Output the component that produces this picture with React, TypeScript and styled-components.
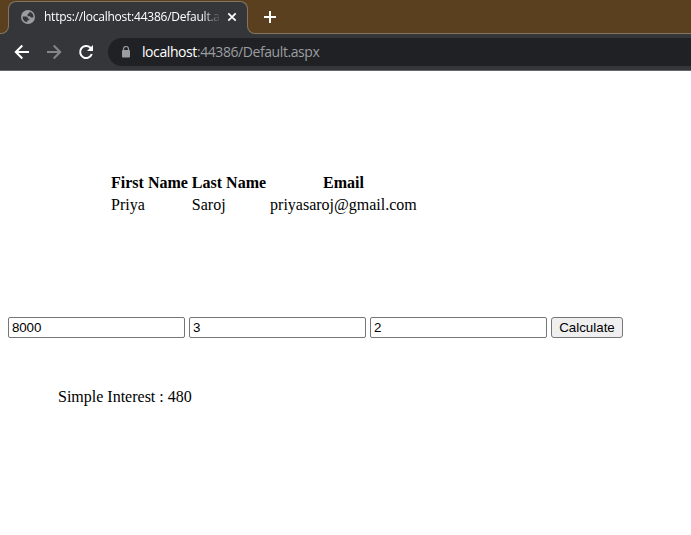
import React from 'react';
import styled, { createGlobalStyle } from 'styled-components';

const FRAME = '#5a401e';
const BAR = '#35363a';
const LINE = '#85765e';

const Global = createGlobalStyle`
  * { box-sizing: border-box; }
  html, body { margin: 0; padding: 0; background: #fff; overflow: hidden; }
  body { font-family: "Liberation Serif", "Times New Roman", serif; font-size: 16px; color: #000; }
`;

const Window = styled.div`
  width: 691px;
  height: 535px;
  display: flex;
  flex-direction: column;
`;

const TabStrip = styled.div`
  height: 34px;
  flex: none;
  display: flex;
  align-items: flex-end;
  background: linear-gradient(${FRAME} 12px, ${BAR} 12px);
`;

const Frame = styled.div<{ $side: 'left' | 'right' }>`
  height: 22px;
  background: ${FRAME};
  border-bottom: 1px solid ${LINE};
  ${({ $side }) =>
    $side === 'left'
      ? `width: 9px; border-right: 1px solid ${LINE}; border-bottom-right-radius: 8px;`
      : `flex: 1; border-left: 1px solid ${LINE}; border-bottom-left-radius: 8px;`}
`;

const Tab = styled.div`
  position: relative;
  width: 238px;
  height: 34px;
  padding: 0 10px 0 12px;
  display: flex;
  align-items: center;

  &::before {
    content: '';
    position: absolute;
    top: 1px;
    left: -1px;
    right: -1px;
    height: 12px;
    background: ${BAR};
    border: 1px solid ${LINE};
    border-bottom: 0;
    border-radius: 8px 8px 0 0;
  }

  > * { position: relative; flex: none; }
`;

const TabTitle = styled.span`
  width: 176px;
  margin-left: 9px;
  overflow: hidden;
  white-space: nowrap;
  font: 12px/18px "Open Sans", sans-serif;
  letter-spacing: -0.24px;
  color: #fff;
  mask-image: linear-gradient(to right, #000 158px, transparent 177px);
`;

const CloseIcon = styled.svg`
  margin-left: 7px;
`;

const NewTab = styled.svg`
  display: block;
  margin: -2px 0 0 15px;
`;

const Toolbar = styled.div`
  height: 37px;
  flex: none;
  display: flex;
  align-items: center;
  padding-left: 14px;
  background: ${BAR};
  border-bottom: 1px solid #66656a;
`;

const NavIcon = styled.svg<{ $dim?: boolean }>`
  width: 16px;
  height: 16px;
  margin-right: 16px;
  flex: none;
  color: ${({ $dim }) => ($dim ? '#85868a' : '#fff')};
`;

const AddressBar = styled.div`
  flex: 1;
  height: 28px;
  margin-left: -2px;
  padding-left: 13px;
  display: flex;
  align-items: center;
  background: #202124;
  border-radius: 14px 0 0 14px;
`;

const Url = styled.span`
  margin-left: 11px;
  font: 14px/20px "Open Sans", sans-serif;
  letter-spacing: -0.42px;
  color: #9a9da1;
  white-space: nowrap;
`;

const Host = styled.span`
  color: #fff;
`;

const Page = styled.main`
  flex: 1;
  padding: 100px 8px 0;
`;

const People = styled.table`
  margin-left: 100px;
  border-spacing: 2px;
  line-height: 18px;

  th, td { padding: 1px; white-space: nowrap; }
  td { text-align: left; }
`;

const Form = styled.form`
  display: flex;
  gap: 4px;
  margin-top: 100px;
`;

const Field = styled.input`
  width: 177px;
  height: 21px;
  padding: 1px 3px;
  border: 1px solid #767676;
  border-radius: 2px;
  background: #fff;
  color: #000;
  font: 13.333px "Liberation Sans", Arial, sans-serif;
  letter-spacing: -0.1px;
  outline: 0;
`;

const Calculate = styled.button`
  width: 72px;
  height: 21px;
  padding: 0;
  border: 1px solid #767676;
  border-radius: 3px;
  background: #efefef;
  color: #000;
  font: 13.333px "Liberation Sans", Arial, sans-serif;
`;

const Result = styled.p`
  margin: 50px 0 0 50px;
  line-height: 18px;
`;

export default function App() {
  return (
    <Window>
      <Global />
      <TabStrip>
        <Frame $side="left" />
        <Tab>
          <svg width="14" height="14" viewBox="0 0 14 14">
            <circle cx="7" cy="7" r="7" fill="#9a9da1" />
            <path
              d="M1.6 6.6H4.8C6.2 6.6 6.9 7.3 6.9 8.7H8.3V10.2H6.3V12.3A5.4 5.4 0 0 1 1.6 6.6ZM8.3 1.8A5.4 5.4 0 0 1 12.4 7.6H10.4C9.5 7.6 9.2 7 9.2 6.2H6.6V4.6C6.6 3.8 7.2 3.5 8.3 3.5Z"
              fill={BAR}
            />
          </svg>
          <TabTitle>https://localhost:44386/Default.aspx</TabTitle>
          <CloseIcon width="10" height="10" viewBox="0 0 10 10">
            <path d="M1.3 1.3 8.7 8.7M8.7 1.3 1.3 8.7" stroke="#fff" strokeWidth="1.7" />
          </CloseIcon>
        </Tab>
        <Frame $side="right">
          <NewTab width="14" height="14" viewBox="0 0 14 14">
            <path d="M7 1V13M1 7H13" stroke="#fff" strokeWidth="2" />
          </NewTab>
        </Frame>
      </TabStrip>
      <Toolbar>
        <NavIcon viewBox="0 0 16 16">
          <path d="M15 8H2M8.3 1.5 1.8 8l6.5 6.5" fill="none" stroke="currentColor" strokeWidth="2" />
        </NavIcon>
        <NavIcon viewBox="0 0 16 16" $dim>
          <path d="M1 8h13M7.7 1.5 14.2 8l-6.5 6.5" fill="none" stroke="currentColor" strokeWidth="2" />
        </NavIcon>
        <NavIcon viewBox="0 0 16 16">
          <path d="M13.8 10A6 6 0 1 1 12.4 3.8L13.3 4.8" fill="none" stroke="currentColor" strokeWidth="2" />
          <path d="M15 1V7H9Z" fill="currentColor" />
        </NavIcon>
        <AddressBar>
          <svg width="10" height="12" viewBox="0 0 10 12">
            <path d="M2.5 5V3a2.5 2.5 0 0 1 5 0v2" fill="none" stroke="#9a9da1" strokeWidth="1.2" />
            <rect x="1" y="4" width="8" height="7.5" rx="1" fill="#9a9da1" />
          </svg>
          <Url>
            <Host>localhost</Host>:44386/Default.aspx
          </Url>
        </AddressBar>
      </Toolbar>
      <Page>
        <People>
          <thead>
            <tr>
              <th>First Name</th>
              <th>Last Name</th>
              <th>Email</th>
            </tr>
          </thead>
          <tbody>
            <tr>
              <td>Priya</td>
              <td>Saroj</td>
              <td>priyasaroj@gmail.com</td>
            </tr>
          </tbody>
        </People>
        <Form onSubmit={(event) => event.preventDefault()}>
          <Field defaultValue="8000" />
          <Field defaultValue="3" />
          <Field defaultValue="2" />
          <Calculate type="submit">Calculate</Calculate>
        </Form>
        <Result>Simple Interest : 480</Result>
      </Page>
    </Window>
  );
}
